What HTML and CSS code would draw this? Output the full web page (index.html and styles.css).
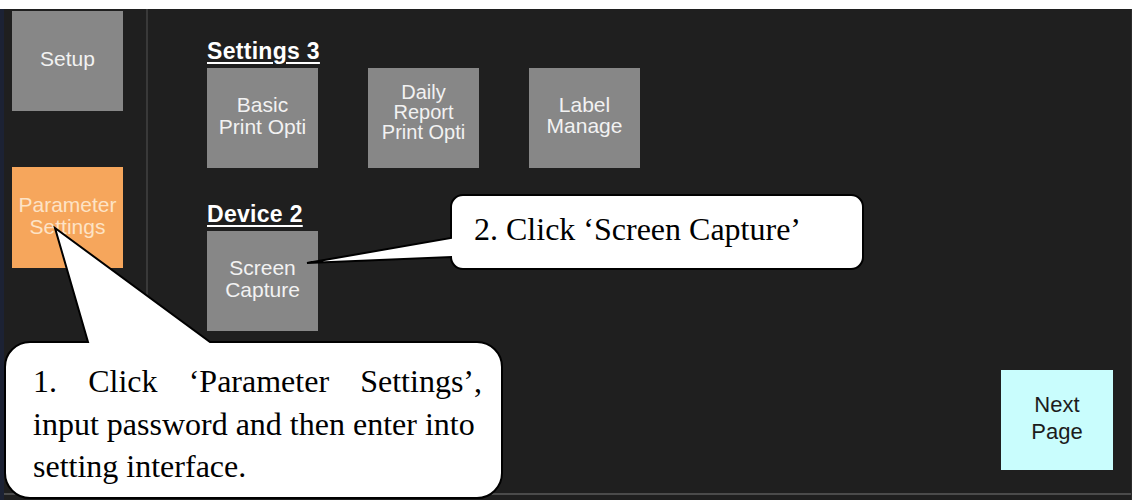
FILE: index.html
```html
<!DOCTYPE html>
<html lang="en">
<head>
  <meta charset="UTF-8">
  <meta name="viewport" content="width=device-width, initial-scale=1.0">
  <title>Parameter Settings - Screen Capture</title>
  <link rel="stylesheet" href="styles.css">
</head>
<body>
  <!-- last line of the document text, cut off by the screenshot -->
  <div class="doc-line">
    <p class="doc-text">Step using the screens, please see below.</p>
  </div>

  <div class="screen">
    <div class="panel">
      <aside class="side">
        <div class="tile tile-gray">Setup</div>
        <div class="tile tile-orange">Parameter<br>Settings</div>
      </aside>

      <main class="main">
        <section class="group">
          <h2 class="group-title">Settings 3</h2>
          <div class="tiles">
            <div class="tile tile-gray">Basic<br>Print Opti</div>
            <div class="tile tile-gray tile-three">Daily<br>Report<br>Print Opti</div>
            <div class="tile tile-gray tile-tight">Label<br>Manage</div>
          </div>
        </section>

        <section class="group group-device">
          <h2 class="group-title">Device 2</h2>
          <div class="tiles">
            <div class="tile tile-gray">Screen<br>Capture</div>
          </div>
        </section>

        <div class="next-row">
          <div class="tile tile-cyan">Next<br>Page</div>
        </div>
      </main>
    </div>
  </div>

  <!-- callout bubbles drawn over the screenshot -->
  <div class="callouts">
    <svg class="bubbles" width="1132" height="500" viewBox="0 0 1132 500">
      <path d="M30 342 L88 342 L55 228 L210 342 L477 342 A25 25 0 0 1 502 367 L502 473 A25 25 0 0 1 477 498 L30 498 A25 25 0 0 1 5 473 L5 367 A25 25 0 0 1 30 342 Z"/>
      <path d="M463 195 L851 195 A12 12 0 0 1 863 207 L863 257 A12 12 0 0 1 851 269 L463 269 A12 12 0 0 1 451 257 L307 263 L451 238 L451 207 A12 12 0 0 1 463 195 Z"/>
    </svg>
    <div class="note note-one">
      <span class="note-first">1. Click ‘Parameter Settings’,</span>
      <span class="note-line">input password and then enter into</span>
      <span class="note-line">setting interface.</span>
    </div>
    <div class="note note-two">2. Click ‘Screen Capture’</div>
  </div>
</body>
</html>
```

FILE: styles.css
```css
/* Page */
body {
  margin: 0;
  padding: 0;
  width: 1132px;
  height: 500px;
  position: relative;
  overflow: hidden;
  background-color: #fff;
  font-family: "Liberation Sans", Arial, sans-serif;
}

/* cut off document line above the screenshot */
.doc-line {
  height: 9px;
  overflow: hidden;
  background-color: #fff;
}
.doc-text {
  margin: -34px 0 0 0;
  padding-left: 31px;
  font-family: "Liberation Serif", "Times New Roman", serif;
  font-size: 32px;
  line-height: 32px;
  color: #000;
  white-space: nowrap;
}

/* device screen */
.screen {
  height: 491px;
  background-color: #1f1f1f;
  border-left: 4px solid #1c2234;
  border-right: 1px solid #2c2c2c;
  box-sizing: border-box;
}
.panel {
  display: flex;
  height: 484px;
  border-bottom: 2px solid #4b4b4b;
}
.side {
  width: 144px;
  padding: 2px 0 0 8px;
  box-sizing: border-box;
  border-right: 2px solid #393939;
  display: flex;
  flex-direction: column;
  gap: 56px;
}
.main {
  flex: 1;
  padding: 30px 18px 0 59px;
}

/* groups */
.group-title {
  margin: 0 0 5px 0;
  font-size: 23px;
  line-height: 24px;
  font-weight: bold;
  letter-spacing: 0.3px;
  color: #fff;
  text-decoration: underline;
  text-decoration-thickness: 2px;
  text-underline-offset: 3px;
}
.group-device {
  margin-top: 34px;
}
.tiles {
  display: flex;
  gap: 50px;
}

/* buttons */
.tile {
  width: 111px;
  height: 100px;
  display: flex;
  align-items: center;
  justify-content: center;
  text-align: center;
  font-size: 21px;
  line-height: 22px;
  box-sizing: border-box;
  padding-bottom: 4px;
}
.tile-gray {
  background-color: #878787;
  color: #f2f2f2;
}
.tile-three {
  font-size: 20px;
  line-height: 20px;
  padding-bottom: 12px;
}
.tile-tight {
  line-height: 21px;
  padding-bottom: 6px;
}
.tile-orange {
  background-color: #f6a65c;
  color: #fde3c6;
  height: 101px;
}
.tile-cyan {
  width: 112px;
  background-color: #c9fdfd;
  color: #1c1c1c;
  font-size: 22px;
  line-height: 27px;
}
.next-row {
  display: flex;
  justify-content: flex-end;
  margin-top: 39px;
}

/* callouts */
.callouts {
  position: absolute;
  left: 0;
  top: 0;
  width: 1132px;
  height: 500px;
  pointer-events: none;
}
.bubbles {
  display: block;
}
.bubbles path {
  fill: #fff;
  stroke: #000;
  stroke-width: 2;
  stroke-linejoin: miter;
}
.note {
  position: absolute;
  font-family: "Liberation Serif", "Times New Roman", serif;
  font-size: 32px;
  color: #000;
}
.note-one {
  left: 33px;
  top: 360px;
  width: 449px;
  line-height: 42.5px;
}
.note-first {
  display: block;
  text-align: justify;
  text-align-last: justify;
}
.note-line {
  display: block;
  white-space: nowrap;
}
.note-two {
  left: 474px;
  top: 213px;
  line-height: 32px;
  white-space: nowrap;
}
```
